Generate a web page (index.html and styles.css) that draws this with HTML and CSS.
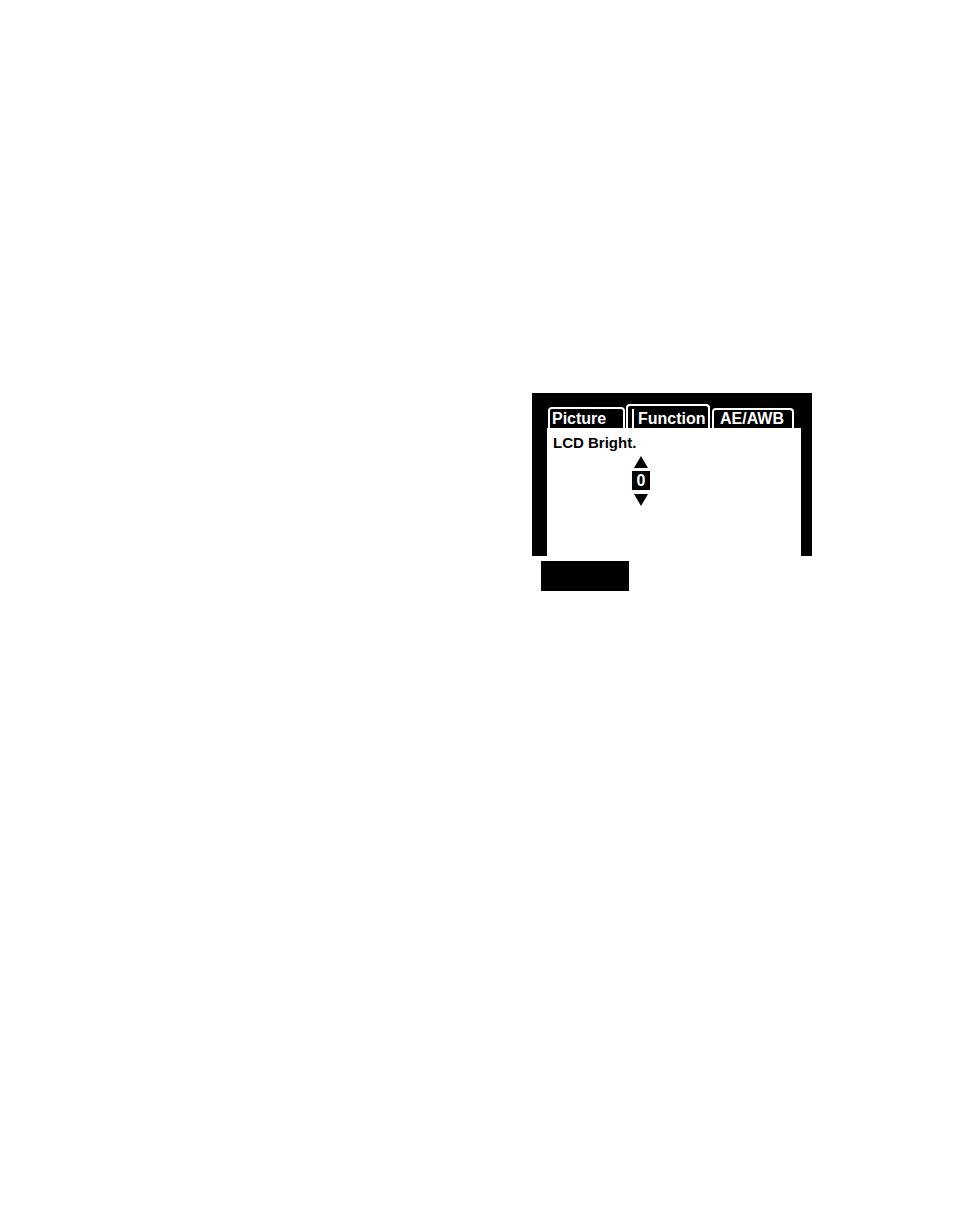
FILE: index.html
```html
<!DOCTYPE html>
<html lang="en">
<head>
    <meta charset="UTF-8">
    <meta name="viewport" content="width=device-width, initial-scale=1.0">
    <title>LCD Bright.</title>
    <link rel="stylesheet" href="styles.css">
</head>
<body>
    <div class="page">
        <div class="menu-screen">
            <div class="tab-row">
                <div class="tab tab-picture">Picture</div>
                <div class="tab tab-function active"><span class="marker"></span>Function</div>
                <div class="tab tab-aeawb">AE/AWB</div>
            </div>

            <div class="menu-body">
                <div class="item-label">LCD Bright.</div>
                <div class="stepper">
                    <div class="arrow-up"></div>
                    <div class="value">0</div>
                    <div class="arrow-down"></div>
                </div>
            </div>
        </div>

        <div class="caption-box"></div>
    </div>
</body>
</html>
```

FILE: styles.css
```css
body {
    margin: 0;
    background: #fff;
    font-family: "Liberation Sans", Arial, sans-serif;
}

.page {
    padding: 393px 0 0 532px;
}

.menu-screen {
    width: 254px;
    background: #000;
    padding: 11px 11px 0 15px;
}

.tab-row {
    display: flex;
    align-items: flex-end;
    height: 24px;
}

.tab {
    box-sizing: border-box;
    border: 2px solid #fff;
    border-bottom: none;
    border-radius: 4px 4px 0 0;
    background: #000;
    color: #fff;
    font-weight: bold;
    font-size: 16px;
    line-height: 16px;
    padding: 2px 0 1px 2px;
    white-space: nowrap;
}

.tab-picture {
    width: 77px;
    margin-left: 1px;
}

.tab-function {
    width: 84px;
    height: 24px;
    margin-left: 1px;
    padding-top: 5px;
    display: flex;
    align-items: flex-end;
}

.tab-function .marker {
    width: 2px;
    height: 19px;
    flex-shrink: 0;
    background: #fff;
    margin: -2px 4px -1px 2px;
}

.tab-aeawb {
    width: 82px;
    margin-left: 2px;
    padding-top: 1px;
    padding-left: 6px;
}

.menu-body {
    background: #fff;
    height: 128px;
    box-sizing: border-box;
    padding: 7px 0 0 6px;
}

.item-label {
    font-weight: bold;
    font-size: 15px;
    line-height: 15px;
    color: #000;
}

.stepper {
    width: 18px;
    margin: 6px 0 0 79px;
    display: flex;
    flex-direction: column;
    align-items: center;
}

.arrow-up {
    width: 0;
    height: 0;
    border-left: 7px solid transparent;
    border-right: 7px solid transparent;
    border-bottom: 12px solid #000;
}

.arrow-down {
    width: 0;
    height: 0;
    margin-top: 4px;
    border-left: 7px solid transparent;
    border-right: 7px solid transparent;
    border-top: 12px solid #000;
}

.value {
    width: 18px;
    height: 19px;
    margin-top: 3px;
    background: #000;
    color: #fff;
    font-weight: bold;
    font-size: 16px;
    line-height: 19px;
    text-align: center;
}

.caption-box {
    width: 88px;
    height: 30px;
    margin: 5px 0 0 9px;
    background: #000;
}
```
